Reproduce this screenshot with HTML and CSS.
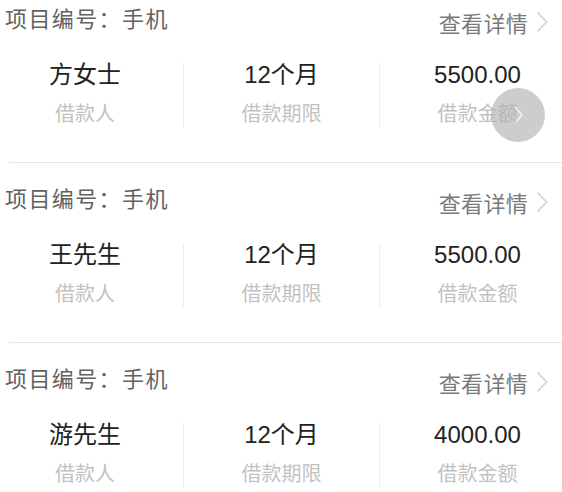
FILE: index.html
```html
<!DOCTYPE html>
<html lang="zh">
<head>
<meta charset="utf-8">
<link rel="stylesheet" href="styles.css">
</head>
<body>
<div class="list">
  <div class="card">
    <div class="head">
      <span class="title">项目编号：手机</span>
      <span class="link">查看详情<svg class="chev" width="12" height="22" viewBox="0 0 12 22"><path d="M1.5 1.5 L10.5 11 L1.5 20.5" fill="none" stroke="#d6d6d6" stroke-width="1.8"/></svg></span>
    </div>
    <div class="body">
      <div class="col"><span class="val">方女士</span><span class="lbl">借款人</span></div>
      <div class="col"><span class="val">12个月</span><span class="lbl">借款期限</span></div>
      <div class="col"><span class="val">5500.00</span><span class="lbl">借款金额</span></div>
    </div>
    <div class="sep"></div>
  </div>
  <div class="card">
    <div class="head">
      <span class="title">项目编号：手机</span>
      <span class="link">查看详情<svg class="chev" width="12" height="22" viewBox="0 0 12 22"><path d="M1.5 1.5 L10.5 11 L1.5 20.5" fill="none" stroke="#d6d6d6" stroke-width="1.8"/></svg></span>
    </div>
    <div class="body">
      <div class="col"><span class="val">王先生</span><span class="lbl">借款人</span></div>
      <div class="col"><span class="val">12个月</span><span class="lbl">借款期限</span></div>
      <div class="col"><span class="val">5500.00</span><span class="lbl">借款金额</span></div>
    </div>
    <div class="sep"></div>
  </div>
  <div class="card">
    <div class="head">
      <span class="title">项目编号：手机</span>
      <span class="link">查看详情<svg class="chev" width="12" height="22" viewBox="0 0 12 22"><path d="M1.5 1.5 L10.5 11 L1.5 20.5" fill="none" stroke="#d6d6d6" stroke-width="1.8"/></svg></span>
    </div>
    <div class="body">
      <div class="col"><span class="val">游先生</span><span class="lbl">借款人</span></div>
      <div class="col"><span class="val">12个月</span><span class="lbl">借款期限</span></div>
      <div class="col"><span class="val">4000.00</span><span class="lbl">借款金额</span></div>
    </div>
    <div class="sep"></div>
  </div>
</div>
<div class="touch"><svg width="10" height="18" viewBox="0 0 10 18"><path d="M1.5 1.5 L8 9 L1.5 16.5" fill="none" stroke="#f2f2f2" stroke-width="1.6"/></svg></div>
</body>
</html>
```
FILE: styles.css
```css
html, body {
  margin: 0;
  padding: 0;
  background: #fff;
  overflow: hidden;
}
body {
  width: 562px;
  height: 492px;
  position: relative;
  font-family: "Liberation Sans", "Noto Sans CJK SC", sans-serif;
}
.list {
  display: flex;
  flex-direction: column;
}
.card {
  padding-top: 4px;
  display: flex;
  flex-direction: column;
}
.head {
  display: flex;
  justify-content: space-between;
  align-items: flex-start;
  padding: 0 14px 0 5px;
}
.title {
  font-family: "Noto Sans CJK SC", sans-serif;
  font-size: 22px;
  line-height: 26px;
  letter-spacing: 1.4px;
  color: #626262;
}
.link {
  margin-top: 5px;
  display: flex;
  align-items: center;
  gap: 8px;
  font-family: "Noto Sans CJK SC", sans-serif;
  font-size: 22px;
  line-height: 26px;
  letter-spacing: 0.3px;
  color: #7a7a7a;
}
.chev {
  display: block;
}
.body {
  margin-top: 28px;
  margin-left: -13px;
  display: grid;
  grid-template-columns: 196px 196px 196px;
}
.col {
  display: flex;
  flex-direction: column;
  align-items: center;
  height: 64px;
  box-sizing: border-box;
}
.col + .col {
  border-left: 1px solid #ececec;
}
.val {
  font-size: 24px;
  line-height: 24px;
  color: #222;
}
.lbl {
  margin-top: 16px;
  font-family: "Noto Sans CJK SC", sans-serif;
  font-size: 20px;
  line-height: 20px;
  color: #c2c2c2;
}
.sep {
  margin: 35px 0 17px 9px;
  height: 1px;
  background: #e6e6e6;
}
.touch {
  position: absolute;
  left: 491px;
  top: 88px;
  width: 54px;
  height: 54px;
  border-radius: 50%;
  background: rgba(175, 175, 175, 0.62);
  display: flex;
  align-items: center;
  justify-content: center;
  padding-right: 0;
}
.touch svg {
  margin-left: 2px;
}
```
